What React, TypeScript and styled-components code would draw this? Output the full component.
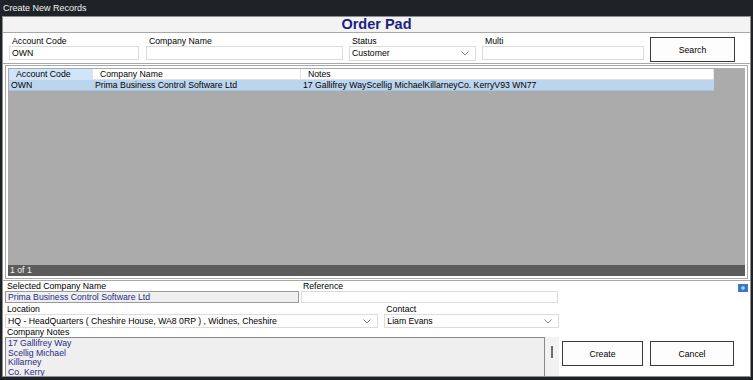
import styled, { createGlobalStyle } from "styled-components";

const GlobalStyle = createGlobalStyle`
  html, body {
    margin: 0;
    padding: 0;
    background: #1d2326;
    font-family: "Liberation Sans", Arial, sans-serif;
    font-size: 8.7px;
    color: #000;
  }
  * { box-sizing: border-box; }
`;

const Page = styled.div`
  width: 753px;
  height: 380px;
  overflow: hidden;
  background: #1d2326;
`;

const TitleBar = styled.div`
  height: 16px;
  padding-left: 3px;
  color: #f2f2f2;
  font-size: 9px;
  line-height: 16px;
`;

const Window = styled.div`
  margin-left: 2px;
  width: 749px;
  height: 361px;
  background: #fff;
  border: 1px solid #8e8e8e;
  display: flex;
  flex-direction: column;
  overflow: hidden;
`;

const Header = styled.div`
  flex-shrink: 0;
  height: 16px;
  background: #f3f3f3;
  border-bottom: 1px solid #a8a8a8;
  text-align: center;
  color: #1a237e;
  font-weight: bold;
  font-size: 14.5px;
  line-height: 15px;
`;

const Filters = styled.div`
  flex-shrink: 0;
  height: 31px;
  display: flex;
  align-items: flex-start;
  padding: 3px 0 0 6px;
  border-bottom: 1px solid #a8a8a8;
`;

const Field = styled.div<{ w: number; gap?: number }>`
  width: ${(p) => p.w}px;
  margin-right: ${(p) => p.gap ?? 6}px;
  display: flex;
  flex-direction: column;
`;

const Label = styled.div<{ indent?: number; h?: number }>`
  height: ${(p) => p.h ?? 10}px;
  line-height: ${(p) => p.h ?? 10}px;
  padding-left: ${(p) => p.indent ?? 3}px;
  white-space: nowrap;
`;

const TextBox = styled.div<{ grey?: boolean; navy?: boolean; h?: number }>`
  height: ${(p) => p.h ?? 14}px;
  line-height: ${(p) => (p.h ?? 14) - 2}px;
  padding-left: 2px;
  border: 1px solid ${(p) => (p.grey ? "#9a9a9a" : "#dcdcdc")};
  background: ${(p) => (p.grey ? "#efefef" : "#fff")};
  color: ${(p) => (p.navy ? "#1f2a8a" : "#000")};
  white-space: nowrap;
  overflow: hidden;
`;

const Select = styled(TextBox)`
  display: flex;
  justify-content: space-between;
  align-items: center;
  padding-right: 6px;
`;

const Chevron = () => (
  <svg width="8" height="5" viewBox="0 0 8 5">
    <path d="M0.5 0.5 L4 4 L7.5 0.5" fill="none" stroke="#777" strokeWidth="0.9" />
  </svg>
);

const Button = styled.div<{ w: number }>`
  width: ${(p) => p.w}px;
  height: 25px;
  border: 1px solid #3a3a3a;
  background: #fdfdfd;
  display: flex;
  align-items: center;
  justify-content: center;
  font-size: 8.7px;
`;

const GridFrame = styled.div`
  flex-shrink: 0;
  margin: 1px 2px 0 2px;
  height: 214px;
  border: 1px solid #a8a8a8;
  padding: 2px;
  display: flex;
  flex-direction: column;
`;

const GridArea = styled.div`
  flex: 1;
  background: #ababab;
  padding-top: 1px;
  padding-left: 1px;
`;

const Row = styled.div<{ header?: boolean }>`
  width: 705px;
  height: 11px;
  display: grid;
  grid-template-columns: 84px 208px 1fr;
  background: ${(p) => (p.header ? "#fff" : "#bcd5ee")};
  border-bottom: 1px solid ${(p) => (p.header ? "#e0e0e0" : "#a9c3dd")};
`;

const Cell = styled.div<{ active?: boolean; header?: boolean }>`
  line-height: 10px;
  padding-left: ${(p) => (p.header ? 7 : 2)}px;
  white-space: nowrap;
  overflow: hidden;
  background: ${(p) => (p.active ? "#cde6fb" : "transparent")};
  border-right: 1px solid ${(p) => (p.header ? "#e4e4e4" : "transparent")};
`;

const StatusStrip = styled.div`
  height: 11px;
  background: #5b5b5b;
  color: #f0f0f0;
  line-height: 11px;
  padding-left: 2px;
`;

const Bottom = styled.div`
  flex: 1;
  margin-top: 1px;
  border-top: 1px solid #a8a8a8;
  position: relative;
  display: flex;
  padding: 0 0 0 2px;
`;

const FormCol = styled.div`
  width: 554px;
  display: flex;
  flex-direction: column;
`;

const FormRow = styled.div<{ mb?: number }>`
  display: flex;
  gap: 2px;
  margin-bottom: ${(p) => p.mb ?? 0}px;
`;

const NotesRow = styled.div`
  display: flex;
`;

const Notes = styled.div`
  width: 540px;
  height: 40px;
  border: 1px solid #8a8a8a;
  border-bottom: none;
  background: #efefef;
  color: #1f2a8a;
  padding: 1px 0 0 2px;
  line-height: 9.6px;
  font-size: 8.7px;
  overflow: hidden;
`;

const ScrollTrack = styled.div`
  width: 14px;
  height: 40px;
  background: #f2f2f2;
  display: flex;
  justify-content: center;
  padding-top: 9px;
`;

const Thumb = styled.div`
  width: 2px;
  height: 12px;
  background: #6d6d6d;
`;

const Actions = styled.div`
  display: flex;
  gap: 7px;
  padding: 60px 0 0 3px;
`;

const PlusBadge = styled.div`
  position: absolute;
  top: 3px;
  right: 2px;
  width: 10px;
  height: 8px;
  background: #3c79c2;
  display: flex;
  align-items: center;
  justify-content: center;
`;

export default function App() {
  return (
    <Page>
      <GlobalStyle />
      <TitleBar>Create New Records</TitleBar>
      <Window>
        <Header>Order Pad</Header>
        <Filters>
          <Field w={130} gap={7}>
            <Label>Account Code</Label>
            <TextBox>OWN</TextBox>
          </Field>
          <Field w={197}>
            <Label>Company Name</Label>
            <TextBox />
          </Field>
          <Field w={127}>
            <Label>Status</Label>
            <Select h={15}>
              Customer
              <Chevron />
            </Select>
          </Field>
          <Field w={162}>
            <Label>Multi</Label>
            <TextBox />
          </Field>
          <div style={{ paddingTop: 1 }}>
            <Button w={85}>Search</Button>
          </div>
        </Filters>
        <GridFrame>
          <GridArea>
            <Row header>
              <Cell header active>Account Code</Cell>
              <Cell header>Company Name</Cell>
              <Cell header>Notes</Cell>
            </Row>
            <Row>
              <Cell>OWN</Cell>
              <Cell>Prima Business Control Software Ltd</Cell>
              <Cell>17 Gallifrey WayScellig MichaelKillarneyCo. KerryV93 WN77</Cell>
            </Row>
          </GridArea>
          <StatusStrip>1 of 1</StatusStrip>
        </GridFrame>
        <Bottom>
          <FormCol>
            <FormRow mb={2}>
              <Field w={294} gap={0}>
                <Label indent={2}>Selected Company Name</Label>
                <TextBox grey navy h={12}>Prima Business Control Software Ltd</TextBox>
              </Field>
              <Field w={257} gap={0}>
                <Label indent={2}>Reference</Label>
                <TextBox h={12} />
              </Field>
            </FormRow>
            <FormRow>
              <Field w={374} gap={4}>
                <Label indent={2} h={9}>Location</Label>
                <Select>
                  HQ - HeadQuarters ( Cheshire House, WA8 0RP ) , Widnes, Cheshire
                  <Chevron />
                </Select>
              </Field>
              <Field w={175} gap={0}>
                <Label indent={2} h={9}>Contact</Label>
                <Select>
                  Liam Evans
                  <Chevron />
                </Select>
              </Field>
            </FormRow>
            <Label indent={2} h={9}>Company Notes</Label>
            <NotesRow>
              <Notes>
                17 Gallifrey Way
                <br />
                Scellig Michael
                <br />
                Killarney
                <br />
                Co. Kerry
              </Notes>
              <ScrollTrack>
                <Thumb />
              </ScrollTrack>
            </NotesRow>
          </FormCol>
          <Actions>
            <Button w={81}>Create</Button>
            <Button w={84}>Cancel</Button>
          </Actions>
          <PlusBadge>
            <svg width="4" height="4" viewBox="0 0 4 4">
              <path d="M2 0 V4 M0 2 H4" stroke="#dfe9f6" strokeWidth="1" />
            </svg>
          </PlusBadge>
        </Bottom>
      </Window>
    </Page>
  );
}
